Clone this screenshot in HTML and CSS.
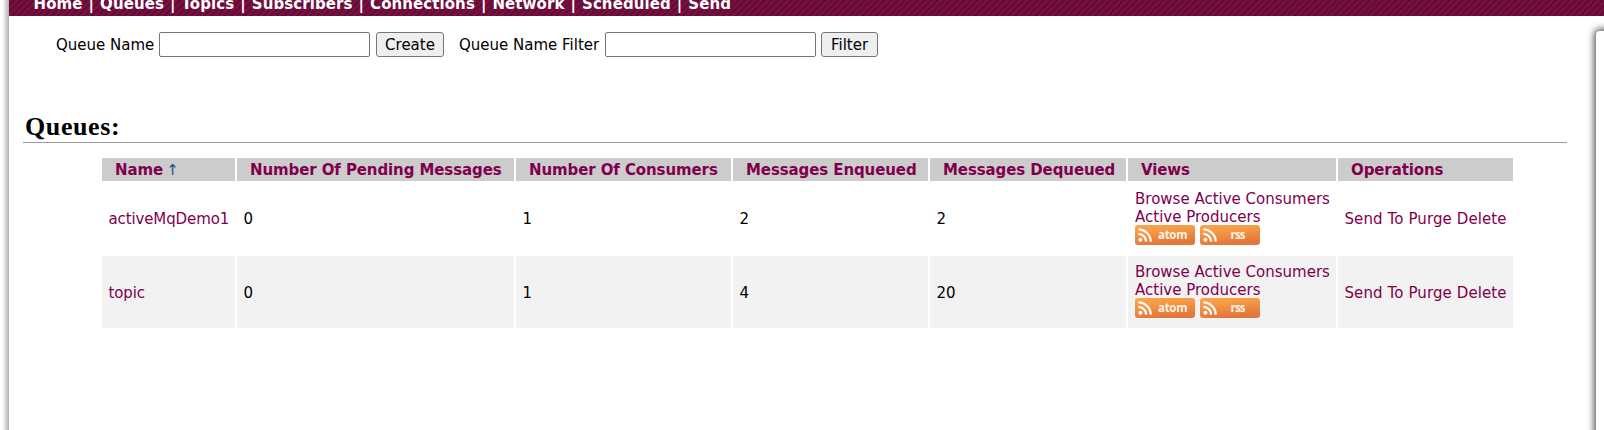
FILE: index.html
```html
<!DOCTYPE html>
<html lang="en">
<head>
<meta charset="utf-8">
<title>Queues</title>
<link rel="stylesheet" href="styles.css">
</head>
<body>
<svg class="defs" aria-hidden="true">
  <defs>
    <linearGradient id="feed-fill" x1="0" y1="0" x2="0.3" y2="1">
      <stop offset="0" stop-color="#fba549"/>
      <stop offset="0.35" stop-color="#f59b46"/>
      <stop offset="1" stop-color="#e2763b"/>
    </linearGradient>
    <symbol id="feed" viewBox="0 0 60 20">
      <rect width="60" height="20" rx="3" fill="url(#feed-fill)"/>
      <circle cx="5.4" cy="14.8" r="2" fill="#fff"/>
      <path d="M3.4 8.8a8 8 0 0 1 7.8 7.8M3.4 4.3a12.6 12.6 0 0 1 12.4 12.3" fill="none" stroke="#fff" stroke-opacity=".95" stroke-width="2.3"/>
    </symbol>
  </defs>
</svg>
<div class="page">
  <div class="edge"></div>
  <div class="main">
    <nav class="nav">
      <a>Home</a><i>|</i><a>Queues</a><i>|</i><a>Topics</a><i>|</i><a>Subscribers</a><i>|</i><a>Connections</a><i>|</i><a>Network</a><i>|</i><a>Scheduled</a><i>|</i><a>Send</a>
    </nav>
    <div class="body">
      <div class="content">
        <div class="forms">
          <label class="l1" for="q">Queue Name</label><input id="q" type="text"><button class="b1">Create</button>
          <label class="l2" for="f">Queue Name Filter</label><input id="f" type="text"><button class="b2">Filter</button>
        </div>
        <h2>Queues:</h2>
        <table class="queues">
          <colgroup><col class="c1"><col class="c2"><col class="c3"><col class="c4"><col class="c5"><col class="c6"><col class="c7"></colgroup>
          <thead>
            <tr><th>Name <b class="arrow">↑</b></th><th>Number Of Pending Messages</th><th>Number Of Consumers</th><th>Messages Enqueued</th><th>Messages Dequeued</th><th>Views</th><th>Operations</th></tr>
          </thead>
          <tbody>
            <tr class="odd">
              <td class="name"><a>activeMqDemo1</a></td><td>0</td><td>1</td><td>2</td><td>2</td>
              <td class="views"><a>Browse</a> <a>Active Consumers</a><br><a>Active Producers</a>
                <div class="feeds"><svg width="60" height="20"><use href="#feed"/><text x="23" y="13.5" textLength="29.5">atom</text></svg><svg width="60" height="20"><use href="#feed"/><text x="30.5" y="13.5" textLength="15">rss</text></svg></div></td>
              <td class="ops"><a>Send To</a> <a>Purge</a> <a>Delete</a></td>
            </tr>
            <tr class="even">
              <td class="name"><a>topic</a></td><td>0</td><td>1</td><td>4</td><td>20</td>
              <td class="views"><a>Browse</a> <a>Active Consumers</a><br><a>Active Producers</a>
                <div class="feeds"><svg width="60" height="20"><use href="#feed"/><text x="23" y="13.5" textLength="29.5">atom</text></svg><svg width="60" height="20"><use href="#feed"/><text x="30.5" y="13.5" textLength="15">rss</text></svg></div></td>
              <td class="ops"><a>Send To</a> <a>Purge</a> <a>Delete</a></td>
            </tr>
          </tbody>
        </table>
      </div>
      <aside class="side"></aside>
    </div>
  </div>
</div>
</body>
</html>
```
FILE: styles.css
```css
* { box-sizing: border-box; }
html, body { margin: 0; height: 100%; overflow: hidden; background: #fff; }
body { font: 15px/18px Verdana, "DejaVu Sans", sans-serif; color: #000; }
.defs { display: block; width: 0; height: 0; }
.page { display: flex; height: 430px; }
.edge { flex: 0 0 9px; background: linear-gradient(90deg, #fff 0 25%, #e6e6e6 50%, #b0b0b0); }
.main { flex: 1; min-width: 0; }
.nav {
  height: 16px; padding: 0 0 3px 24.5px; display: flex; align-items: flex-end;
  color: #fff; font-weight: bold; line-height: 18px; letter-spacing: .08px; white-space: nowrap;
  background: repeating-linear-gradient(135deg, #75103f 0 2.4px, #640936 2.9px 4.2px, #75103f 4.7px);
}
.nav i { font-style: normal; padding: 0 6px; }
.body { display: flex; height: 414px; overflow: hidden; }
.content { flex: 0 0 1544px; margin-left: 14px; }
.forms { display: flex; align-items: center; height: 25px; margin: 16px 0 0 33px; white-space: nowrap; }
.forms label { flex: none; }
.l1 { width: 103px; }
.l2 { width: 146px; margin-left: 15px; }
input { width: 211px; height: 25px; border: 1px solid #767676; border-radius: 2px; padding: 0; margin: 0; background: #fff; }
button { height: 25px; margin: 0 0 0 6px; padding: 0; border: 1px solid #767676; border-radius: 3px; background: #efefef; font: inherit; color: #000; }
.b1 { width: 68px; }
.b2 { width: 57px; margin-left: 5px; }
h2 { height: 30px; margin: 56px 0 15px; padding-left: 2px; border-bottom: 1px solid #999; font: bold 26px/28px Georgia, "Liberation Serif", serif; letter-spacing: .6px; }
.queues { width: 1415px; margin-left: 77px; table-layout: fixed; border-collapse: separate; border-spacing: 2px 2px; margin-top: -2px; }
.c1 { width: 133px; } .c2 { width: 277px; } .c3 { width: 215px; } .c4 { width: 195px; } .c5 { width: 196px; } .c6 { width: 208px; } .c7 { width: 175px; }
th { height: 23px; padding: 0 0 0 13px; background: #ccc; color: #80004d; text-align: left; letter-spacing: -.1px; white-space: nowrap; }
td { height: 72px; padding: 0 0 0 6.5px; vertical-align: middle; white-space: nowrap; }
td a { color: #80004d; }
.odd td { height: 71px; padding-top: 1px; }
.odd td.views { padding: 0 0 2px 7px; }
.even td { padding-top: 2px; background: #f2f2f2; }
.even td.views { padding: 0 0 3px 7px; }
.name { letter-spacing: -.12px; }
.ops { letter-spacing: .1px; }
.arrow { font-weight: normal; color: #16537e; margin-left: -2px; }
.feeds { display: flex; gap: 5px; height: 20px; position: relative; top: -1px; }
.feeds text { font: bold 11.5px "Open Sans", sans-serif; fill: #fff3e6; }
.side { flex: 1; margin: 15px -20px -20px 29px; border-radius: 4px; background: #fff; box-shadow: 0 0 7px 2px #555; }
```
